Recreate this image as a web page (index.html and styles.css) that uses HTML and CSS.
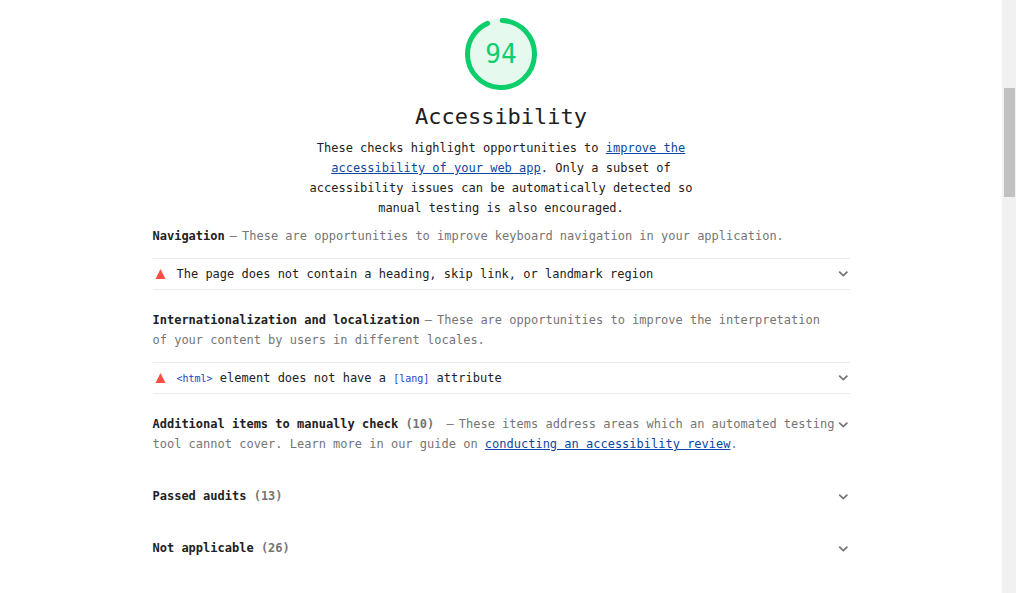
FILE: index.html
```html
<!DOCTYPE html>
<html lang="en">
<head>
<meta charset="utf-8">
<title>Accessibility report</title>
<link rel="stylesheet" href="styles.css">
</head>
<body>
<svg class="defs" aria-hidden="true">
  <symbol id="chevron" viewBox="0 0 12 12"><path d="M1.2 3.6l4.1 3.9 4.1-3.9" fill="none" stroke="currentColor" stroke-width="1.7"/></symbol>
  <symbol id="fail" viewBox="0 0 12 12"><path d="M5.5 1l5 10h-10z" fill="#ff4e42"/></symbol>
</svg>
<div class="viewport">
  <main class="report">
    <header class="category">
      <div class="gauge">
        <svg class="gauge-ring" viewBox="0 0 72 72" aria-hidden="true">
          <circle class="gauge-base" cx="36" cy="36" r="36"/>
          <circle class="gauge-arc" cx="36" cy="36" r="33.5" transform="rotate(-88 36 36)"/>
        </svg>
        <span class="gauge-score">94</span>
      </div>
      <h1 class="title">Accessibility</h1>
      <p class="intro">These checks highlight opportunities to <a href="#improve">improve the accessibility of your web app</a>. Only a subset of accessibility issues can be automatically detected so manual testing is also encouraged.</p>
    </header>

    <section class="group">
      <div class="group-header"><h2 class="group-title">Navigation</h2><span class="group-description">These are opportunities to improve keyboard navigation in your application.</span></div>
      <details class="audit">
        <summary class="audit-row">
          <svg class="icon" aria-hidden="true"><use href="#fail"/></svg>
          <span class="audit-title">The page does not contain a heading, skip link, or landmark region</span>
          <svg class="icon chevron" aria-hidden="true"><use href="#chevron"/></svg>
        </summary>
      </details>
    </section>

    <section class="group">
      <div class="group-header"><h2 class="group-title">Internationalization and localization</h2><span class="group-description">These are opportunities to improve the interpretation of your content by users in different locales.</span></div>
      <details class="audit">
        <summary class="audit-row">
          <svg class="icon" aria-hidden="true"><use href="#fail"/></svg>
          <span class="audit-title"><code class="code">&lt;html&gt;</code> element does not have a <code class="code">[lang]</code> attribute</span>
          <svg class="icon chevron" aria-hidden="true"><use href="#chevron"/></svg>
        </summary>
      </details>
    </section>

    <details class="clump">
      <summary class="clump-header">
        <span class="clump-text"><span class="group-title">Additional items to manually check <span class="count">(10)</span></span> <span class="group-description">These items address areas which an automated testing tool cannot cover. Learn more in our guide on <a href="#review">conducting an accessibility review</a>.</span></span>
        <svg class="icon chevron" aria-hidden="true"><use href="#chevron"/></svg>
      </summary>
    </details>
    <details class="clump">
      <summary class="clump-header">
        <span class="clump-text group-title">Passed audits <span class="count">(13)</span></span>
        <svg class="icon chevron" aria-hidden="true"><use href="#chevron"/></svg>
      </summary>
    </details>
    <details class="clump">
      <summary class="clump-header">
        <span class="clump-text group-title">Not applicable <span class="count">(26)</span></span>
        <svg class="icon chevron" aria-hidden="true"><use href="#chevron"/></svg>
      </summary>
    </details>
  </main>
  <div class="scrollbar" aria-hidden="true"><div class="scroll-thumb"></div></div>
</div>
</body>
</html>
```
FILE: styles.css
```css
* { box-sizing: border-box; }

body {
  margin: 0;
  background: #fff;
  color: #212121;
  font: 12px/20px "DejaVu Sans Mono", monospace;
}

a { color: #0d47a1; }

.defs { display: none; }

.viewport {
  display: flex;
  min-height: 100vh;
}

.report {
  flex: 1;
  max-width: 697px;
  margin: 0 auto;
  padding: 18px 0;
}

.category {
  display: flex;
  flex-direction: column;
  align-items: center;
  margin-bottom: 8px;
}

.gauge {
  display: grid;
  place-items: center;
}

.gauge-ring,
.gauge-score { grid-area: 1 / 1; }

.gauge-ring {
  width: 72px;
  height: 72px;
}

.gauge-base { fill: #e6f9ef; }

.gauge-arc {
  fill: none;
  stroke: #0cce6b;
  stroke-width: 5;
  stroke-linecap: round;
  stroke-dasharray: 195 211;
}

.gauge-score {
  color: #0cce6b;
  font-size: 26px;
  line-height: 32px;
}

.title {
  margin: 13px 0 7px;
  font-size: 22px;
  font-weight: 400;
  line-height: 28px;
}

.intro {
  max-width: 400px;
  margin: 0;
  text-align: center;
}

.group { margin-bottom: 20px; }

.group-header {
  margin-bottom: 12px;
  padding-right: 12px;
}

.group-title {
  display: inline;
  margin: 0;
  font-size: 12px;
  font-weight: 700;
}

.group-description { color: #757575; }

.group-description::before {
  content: "—";
  margin: 0 5px;
}

.count { color: #757575; }

.audit {
  border-top: 1px solid #ebebeb;
  border-bottom: 1px solid #ebebeb;
}

.audit-row {
  display: flex;
  align-items: center;
  gap: 10px;
  padding: 5px 0 5px 2px;
  cursor: pointer;
}

.audit-title { flex: 1; }

.code {
  color: #1a44cc;
  font-family: "DejaVu Sans Mono", monospace;
  font-size: 10px;
  line-height: 1;
}

.icon {
  flex: none;
  width: 12px;
  height: 12px;
}

.chevron { color: #757575; }

.clump { margin-bottom: 32px; }

.clump-header {
  display: flex;
  align-items: flex-start;
  cursor: pointer;
}

.clump-header .chevron { margin-top: 5px; }

.clump-text { flex: 1; }

.scrollbar {
  flex: none;
  width: 14px;
  padding: 88px 1px 0 2px;
  background: #f1f1f1;
}

.scroll-thumb {
  height: 109px;
  background: #c1c1c1;
}
```
